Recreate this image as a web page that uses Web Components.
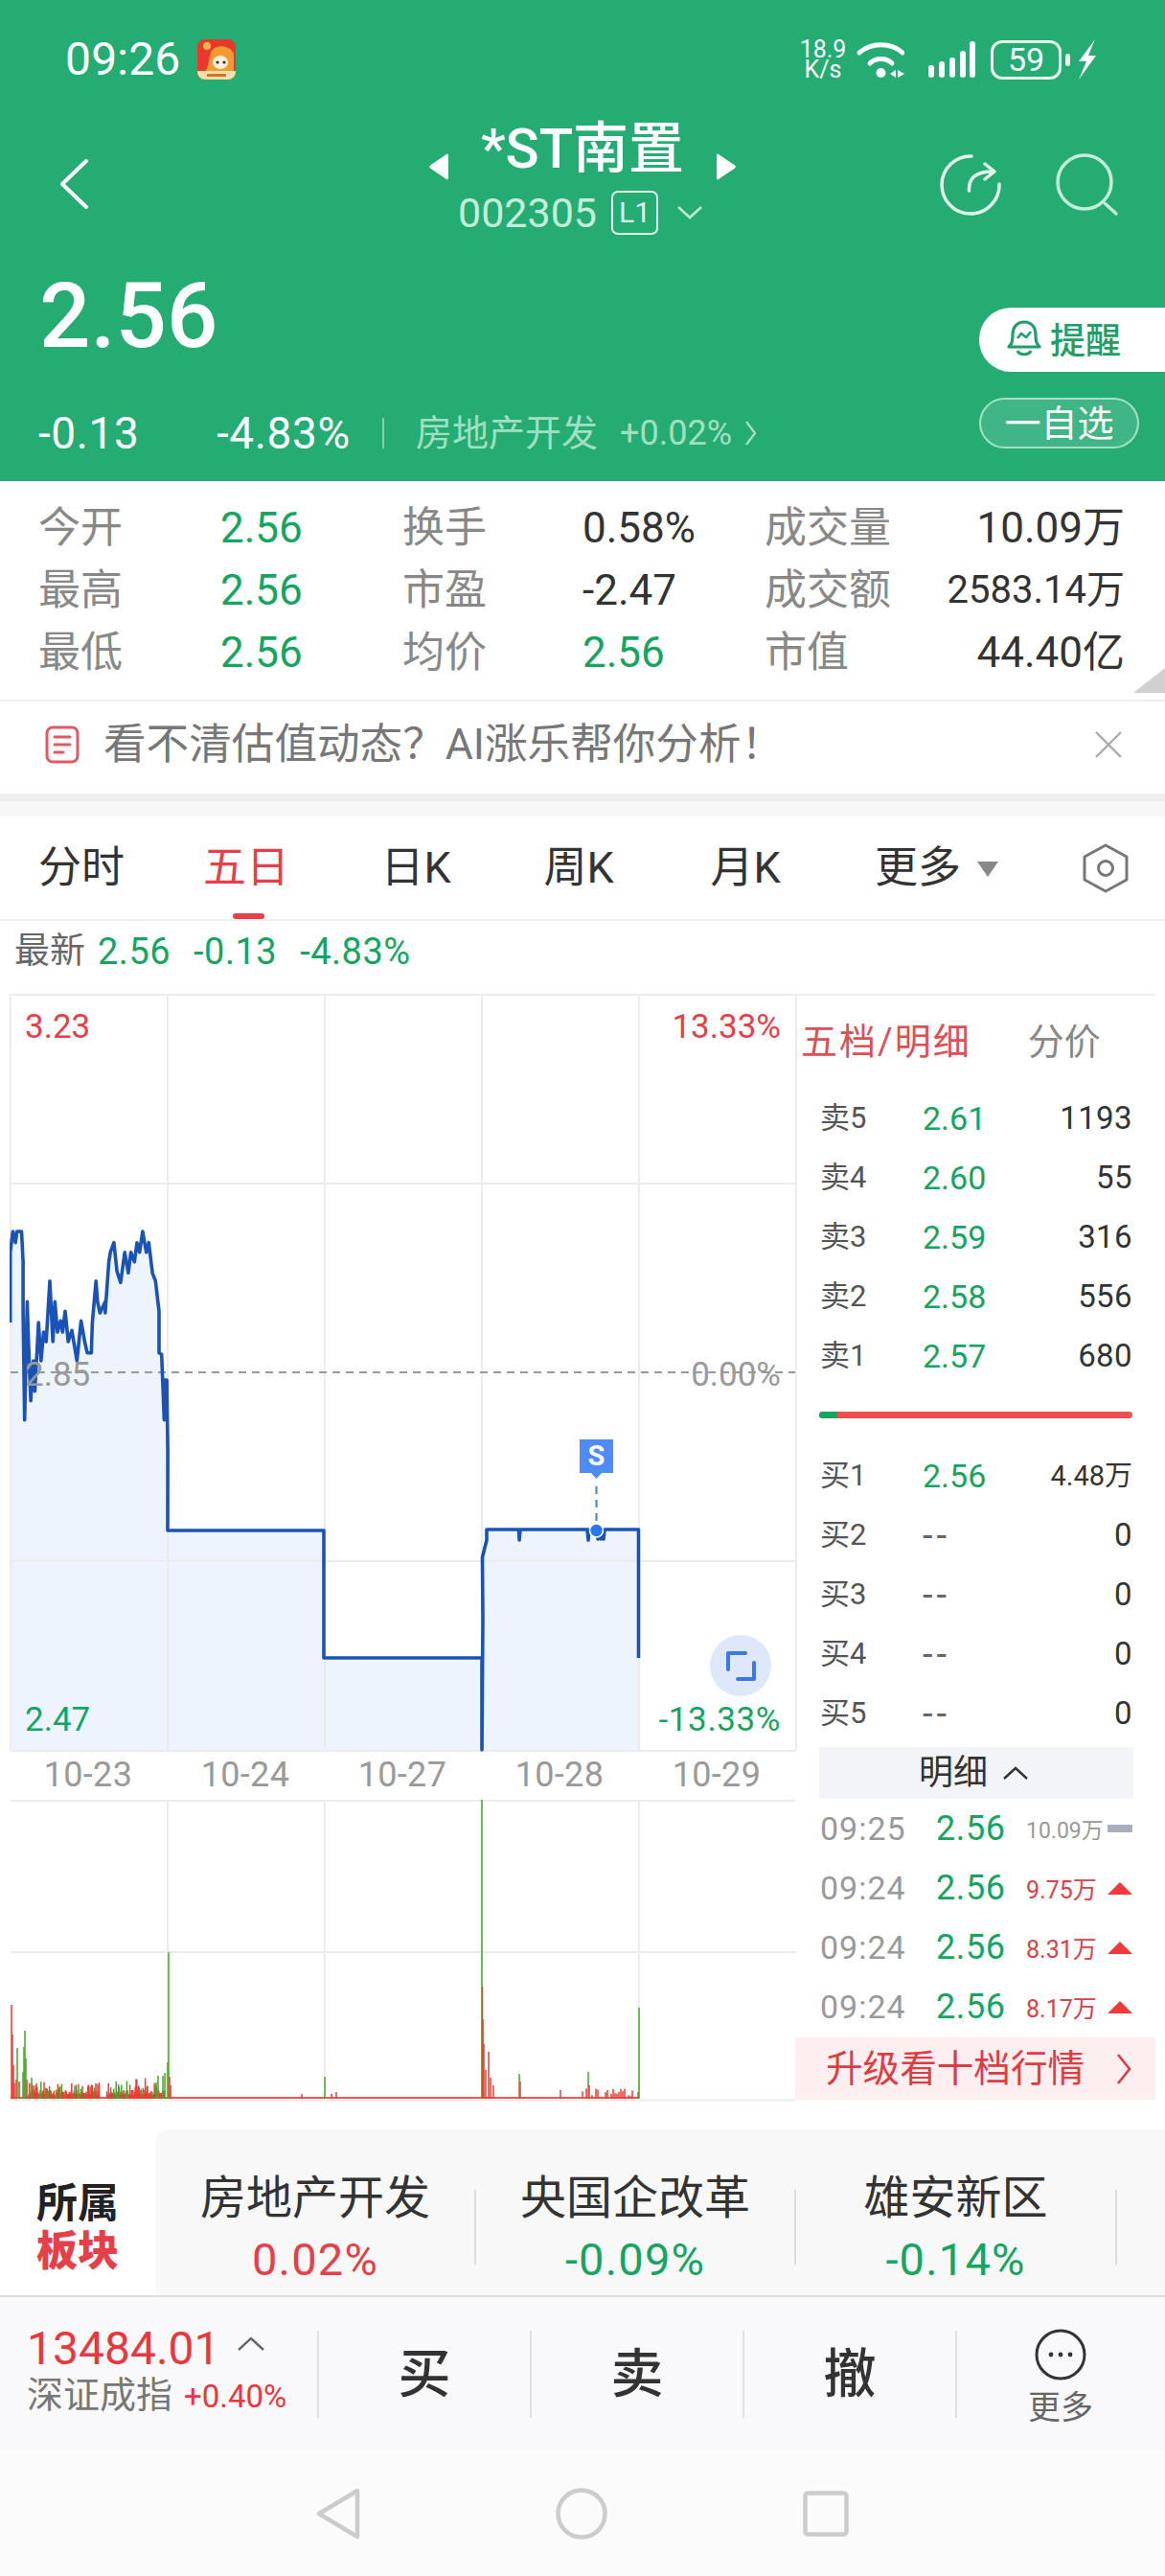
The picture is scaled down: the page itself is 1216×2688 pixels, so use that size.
<!DOCTYPE html>
<html lang="zh">
<head>
<meta charset="utf-8">
<title>*ST南置</title>
<style>
  html, body { margin: 0; padding: 0; }
  body {
    width: 1216px;
    height: 2688px;
    overflow: hidden;
    background: #fff;
    font-family: Roboto, "Noto Sans CJK SC", sans-serif;
    color: #333;
  }
</style>
</head>
<body>
<stock-header></stock-header>
<quote-stats></quote-stats>
<notice-bar></notice-bar>
<period-tabs></period-tabs>
<chart-panel></chart-panel>
<sector-strip></sector-strip>
<trade-bar></trade-bar>
<nav-bar></nav-bar>

<script>
class StatusBar extends HTMLElement {
  connectedCallback() {
    this.attachShadow({ mode: 'open' });
    this.shadowRoot.innerHTML = `
      <style>
        :host { display: flex; align-items: center; height: 124px; padding: 0 71px 0 68px; color: #fff; }
        .time { font-size: 48px; line-height: 56px; letter-spacing: .2px; }
        .app { margin-left: 17px; display: block; }
        .right { margin-left: auto; display: flex; align-items: center; }
        .speed { font-size: 25px; line-height: 21px; text-align: center; width: 54px; }
        .speed span { display: block; }
        .wifi { margin-left: 8px; display: block; }
        .signal { margin-left: 24px; display: block; }
        .batt {
          margin-left: 16px; width: 74px; height: 41px; box-sizing: border-box;
          border: 3px solid #e9f7f0; border-radius: 12px;
          display: flex; align-items: center; justify-content: center;
          font-size: 34px; line-height: 34px;
        }
        .nub { margin-left: 4px; width: 5px; height: 13px; background: #e9f7f0; border-radius: 3px; }
        .bolt { margin-left: 8px; display: block; }
      </style>
      <span class="time">09:26</span>
      <svg class="app" width="40" height="42" viewBox="0 0 40 42">
        <rect width="40" height="42" rx="8" fill="#e8392c"/>
        <path d="M14 14 C18 4 34 6 38 15 L38 34 L8 34 C12 28 12 20 14 14Z" fill="#f09a30"/>
        <ellipse cx="24" cy="24" rx="8" ry="7" fill="#fbeedd"/>
        <circle cx="21" cy="24" r="1.6" fill="#3a2a20"/><circle cx="28" cy="24" r="1.6" fill="#3a2a20"/>
        <circle cx="10" cy="7" r="4" fill="#f6b64a"/>
        <path d="M0 33 H40 V34 A8 8 0 0 1 32 42 H8 A8 8 0 0 1 0 34Z" fill="#f8dfa6"/>
        <rect x="10" y="36" width="20" height="3" fill="#c9772b"/>
      </svg>
      <div class="right">
        <div class="speed"><span>18.9</span><span>K/s</span></div>
        <svg class="wifi" width="50" height="40" viewBox="896 41 50 40">
          <path d="M899 54 C911 43 932 43 944 54" fill="none" stroke="#fff" stroke-width="5" stroke-linecap="round"/>
          <path d="M910 65 C916 59 927 59 933 65" fill="none" stroke="#fff" stroke-width="5" stroke-linecap="round"/>
          <circle cx="921.5" cy="75" r="5" fill="#fff"/>
          <path d="M937 72 V80 L931 76Z M939 72 V80 L946 76Z" fill="#fff"/>
        </svg>
        <svg class="signal" width="50" height="40" viewBox="969 41 50 40">
          <g fill="none" stroke="#fff" stroke-width="6" stroke-linecap="round">
            <path d="M973 70 V77"/><path d="M984 66 V77"/><path d="M995 62 V77"/><path d="M1006 55 V77"/><path d="M1016 45 V77"/>
          </g>
        </svg>
        <div class="batt">59</div>
        <div class="nub"></div>
        <svg class="bolt" width="20" height="42" viewBox="0 0 20 42">
          <path d="M18 0 L1 23 L9 23 L1 42 L19 17 L11 17 L18 0Z" fill="#fff"/>
        </svg>
      </div>
    `;
  }
}
customElements.define('status-bar', StatusBar);

class TitleRow extends HTMLElement {
  connectedCallback() {
    this.attachShadow({ mode: 'open' });
    this.shadowRoot.innerHTML = `
      <style>
        :host { display: block; position: relative; height: 126px; color: #fff; }
        .row { display: grid; grid-template-columns: 448px 320px 1fr; height: 126px; }
        svg { display: block; }
        .back { margin: 41px 0 0 60px; }
        .center { display: flex; flex-direction: column; align-items: center; }
        .name { display: flex; align-items: flex-start; justify-content: space-between; width: 320px; height: 72px; }
        .name b { font-weight: 500; font-size: 58px; line-height: 60px; margin-top: 1px; white-space: nowrap; }
        .name svg { margin-top: 36px; }
        .code { display: flex; align-items: center; margin: 2px 0 0 -5px; color: #c6ecda; font-size: 43px; line-height: 48px; }
        .l1 {
          margin-left: 15px; width: 49px; height: 46px; box-sizing: border-box;
          border: 2px solid #e5f6ee; border-radius: 7px; color: #e5f6ee;
          display: flex; align-items: center; justify-content: center;
          font-size: 30px; line-height: 30px;
        }
        .chev { margin-left: 20px; }
        .tools { display: flex; align-items: flex-start; justify-content: flex-end; padding: 34px 48px 0 0; }
        .tools .search { margin-left: 52px; }
      </style>
      <div class="row">
        <svg class="back" width="34" height="54" viewBox="60 165 34 54">
          <path d="M90 168 L65 192 L90 216" fill="none" stroke="#fff" stroke-width="4" stroke-linecap="round" stroke-linejoin="round"/>
        </svg>
        <div class="center">
          <div class="name">
            <svg width="20" height="28" viewBox="0 0 20 28"><path d="M18 1 C19.5 0 20 1 20 3 V25 C20 27 19 28 18 27 L1 15.5 C0 14.7 0 13.3 1 12.5Z" fill="#fff"/></svg>
            <b>*ST南置</b>
            <svg width="20" height="28" viewBox="0 0 20 28"><path d="M2 1 C.5 0 0 1 0 3 V25 C0 27 1 28 2 27 L19 15.5 C20 14.7 20 13.3 19 12.5Z" fill="#fff"/></svg>
          </div>
          <div class="code">
            <span>002305</span>
            <span class="l1">L1</span>
            <svg class="chev" width="26" height="14" viewBox="0 0 26 14"><path d="M1 1 L13 12 L25 1" fill="none" stroke="#c6ecda" stroke-width="2.4"/></svg>
          </div>
        </div>
        <div class="tools">
          <svg width="70" height="70" viewBox="978 156 70 70">
            <path d="M1014 161 A30 30 0 1 0 1043 190" fill="none" stroke="#e2f5ec" stroke-width="3.5" stroke-linecap="round"/>
            <path d="M1011.5 197 C1011 184 1018 177 1036 177 M1028 169 L1038 177 L1028 185" fill="none" stroke="#e2f5ec" stroke-width="3.5" stroke-linecap="round" stroke-linejoin="round"/>
          </svg>
          <svg class="search" width="68" height="72" viewBox="1102 156 68 72">
            <circle cx="1134" cy="188" r="28" fill="none" stroke="#c4ecd9" stroke-width="3.5"/>
            <path d="M1155 210 L1167 221" stroke="#c4ecd9" stroke-width="3.5" stroke-linecap="round"/>
          </svg>
        </div>
      </div>
    `;
  }
}
customElements.define('title-row', TitleRow);

class StockHeader extends HTMLElement {
  connectedCallback() {
    this.attachShadow({ mode: 'open' });
    this.shadowRoot.innerHTML = `
      <style>
        :host { display: block; height: 502px; background: #25ac72; color: #fff; overflow: hidden; }
        .quote { display: flex; }
        .left { flex: 1; }
        .price { padding: 32px 0 0 41px; font-size: 94px; line-height: 96px; font-weight: 500; }
        .change { display: flex; align-items: center; margin-top: 50px; padding-left: 40px; height: 48px; font-size: 46px; line-height: 48px; letter-spacing: .6px; }
        .chg { width: 186px; }
        .pct { width: 173px; }
        .sep { width: 2px; height: 32px; background: #7fcfab; }
        .plate { margin-left: 33px; font-size: 38px; color: #a0dfc1; letter-spacing: 0; }
        .plate-chg { margin-left: 23px; font-size: 36px; color: #a0dfc1; letter-spacing: 0; }
        .change svg { margin-left: 13px; }
        .right { width: 194px; padding-top: 71px; }
        .remind {
          height: 67px; box-sizing: border-box; padding: 0 0 4px 29px;
          background: #fff; border-radius: 33px 0 0 33px; color: #1f9f68;
          display: flex; align-items: center; font-size: 37px; font-weight: 500;
        }
        .remind span { margin-left: 9px; }
        .watch {
          margin-top: 27px; width: 167px; height: 53px; box-sizing: border-box;
          background: rgba(255,255,255,.12); border: 2px solid rgba(255,255,255,.55); border-radius: 27px;
          display: flex; align-items: center; justify-content: center; font-size: 38px; line-height: 40px;
        }
      </style>
      <status-bar></status-bar>
      <title-row></title-row>
      <div class="quote">
        <div class="left">
          <div class="price">2.56</div>
          <div class="change">
            <span class="chg">-0.13</span>
            <span class="pct">-4.83%</span>
            <span class="sep"></span>
            <span class="plate">房地产开发</span>
            <span class="plate-chg">+0.02%</span>
            <svg width="13" height="28" viewBox="0 0 13 28"><path d="M2 2 L11 14 L2 26" fill="none" stroke="#a0dfc1" stroke-width="2.4"/></svg>
          </div>
        </div>
        <div class="right">
          <div class="remind">
            <svg width="36" height="38" viewBox="0 0 36 38">
              <path d="M2 28 C6 24 6 20 6 15 C6 7 11 2 18 2 C25 2 30 7 30 15 C30 20 30 24 34 28Z" fill="none" stroke="#1f9f68" stroke-width="3.2" stroke-linejoin="round"/>
              <path d="M11 32 C13 37 23 37 25 32" fill="none" stroke="#1f9f68" stroke-width="3.2"/>
              <path d="M11 19 L15 14 L20 18 L25 12" fill="none" stroke="#1f9f68" stroke-width="2.6" stroke-linejoin="round"/>
            </svg>
            <span>提醒</span>
          </div>
          <div class="watch">一自选</div>
        </div>
      </div>
    `;
  }
}
customElements.define('stock-header', StockHeader);

class QuoteStats extends HTMLElement {
  connectedCallback() {
    const rows = [
      ['今开', '2.56', 'g', '换手', '0.58%', 'd', '成交量', '10.09万', ''],
      ['最高', '2.56', 'g', '市盈', '-2.47', 'd', '成交额', '2583.14万', 's'],
      ['最低', '2.56', 'g', '均价', '2.56', 'g', '市值', '44.40亿', '']
    ];
    const cells = rows.map(r => `
      <span class="l">${r[0]}</span><span class="${r[2]}">${r[1]}</span>
      <span class="l">${r[3]}</span><span class="${r[5]}">${r[4]}</span>
      <span class="l">${r[6]}</span><span class="v ${r[8]}">${r[7]}</span>`).join('');
    this.attachShadow({ mode: 'open' });
    this.shadowRoot.innerHTML = `
      <style>
        :host { display: block; position: relative; height: 230px; box-sizing: border-box; padding: 16px 42px 0 40px; border-bottom: 2px solid #eee; background: #fff; }
        .grid { display: grid; grid-template-columns: 190px 190px 188px 190px 140px 1fr; grid-auto-rows: 65px; align-items: center; font-size: 44px; line-height: 50px; }
        .l { color: #888; white-space: nowrap; }
        .g { color: #16a461; }
        .d { color: #333; }
        .v { color: #333; text-align: right; white-space: nowrap; }
        .s { font-size: 40px; }
        .corner { position: absolute; right: 0; bottom: 7px; }
      </style>
      <div class="grid">${cells}</div>
      <svg class="corner" width="33" height="26" viewBox="0 0 33 26"><path d="M33 0 V26 H0Z" fill="#d0d0d0"/></svg>
    `;
  }
}
customElements.define('quote-stats', QuoteStats);

class NoticeBar extends HTMLElement {
  connectedCallback() {
    this.attachShadow({ mode: 'open' });
    this.shadowRoot.innerHTML = `
      <style>
        :host { display: flex; align-items: center; height: 96px; padding: 0 44px 6px 47px; box-sizing: border-box; background: #fff; color: #777; }
        span { margin-left: 25px; font-size: 44.6px; line-height: 50px; white-space: nowrap; }
        .x { margin-left: auto; }
      </style>
      <svg width="36" height="40" viewBox="0 0 36 40">
        <rect x="2" y="2" width="32" height="36" rx="6" fill="none" stroke="#df5a62" stroke-width="3"/>
        <path d="M10 12 H26 M10 20 H26 M10 28 H19" stroke="#df5a62" stroke-width="3" stroke-linecap="round"/>
      </svg>
      <span>看不清估值动态？AI涨乐帮你分析！</span>
      <svg class="x" width="30" height="30" viewBox="0 0 30 30"><path d="M2 2 L28 28 M28 2 L2 28" stroke="#aaa" stroke-width="2.4"/></svg>
    `;
  }
}
customElements.define('notice-bar', NoticeBar);

class PeriodTabs extends HTMLElement {
  connectedCallback() {
    this.attachShadow({ mode: 'open' });
    this.shadowRoot.innerHTML = `
      <style>
        :host { display: block; background: #fff; }
        .band { height: 8px; background: #eee; }
        .band2 { height: 16px; background: #f7f7f7; }
        .tabs {
          display: grid; grid-template-columns: 170px 174px 180px 160px 188px 172px 1fr;
          height: 109px; box-sizing: border-box; border-bottom: 2px solid #eee;
          font-size: 45px; line-height: 50px; color: #333; align-items: center; text-align: center;
        }
        .on { color: #e5404a; position: relative; }
        .on::after {
          content: ""; position: absolute; left: 73px; right: 68px; top: 72px; height: 6px;
          background: #e5404a; border-radius: 3px;
        }
        .more { position: relative; }
        .more svg { position: absolute; left: 147px; top: 18px; }
        .hex { justify-self: start; margin-left: 86px; display: block; }
      </style>
      <div class="band"></div>
      <div class="band2"></div>
      <div class="tabs">
        <span>分时</span>
        <span class="on">五日</span>
        <span>日K</span>
        <span>周K</span>
        <span>月K</span>
        <span class="more">更多<svg width="24" height="16" viewBox="0 0 24 16"><path d="M1 0 H23 L12 16Z" fill="#888"/></svg></span>
        <svg class="hex" width="48" height="52" viewBox="0 0 48 52">
          <path d="M24 2 L46 14 V38 L24 50 L2 38 V14Z" fill="none" stroke="#777" stroke-width="3" stroke-linejoin="round"/>
          <circle cx="24" cy="26" r="7.5" fill="none" stroke="#777" stroke-width="3"/>
        </svg>
      </div>
    `;
  }
}
customElements.define('period-tabs', PeriodTabs);

class PriceChart extends HTMLElement {
  connectedCallback() {
    // day one read off the reference
    const day1 = [[20,1080],[20,860],[25,795],[30,830],[33,795],[42,795],[45,890],[45,1050],[48,1385],[53,1015],[55,1120],[60,1325],[65,1200],[68,1295],[75,1080],[80,1200],[85,1110],[90,1140],[97,950],[103,1140],[107,1015],[112,1110],[118,1075],[122,1110],[127,1045],[133,1140],[140,1105],[150,1200],[158,1075],[165,1140],[170,1175],[178,1175],[180,1080],[187,950],[190,1015],[195,1050],[205,1015],[205,1050],[212,890],[215,860],[222,830],[228,920],[235,955],[243,860],[250,925],[255,860],[262,890],[267,830],[272,860],[278,795],[285,860],[290,830],[297,925],[303,950],[310,1045],[310,1175],[315,1180],[320,1385],[320,1260],[325,1260],[327,1480]]
      .map(p => [+(p[0] / 1.867).toFixed(1), +(p[1] / 3 + 1020).toFixed(1)]);
    const rest = [[175,1597],[338,1597],[338,1730],[503,1730],[503,1826],[504,1690],[503.5,1625],[508,1607],[508,1596],
      [541.5,1596],[542,1607],[543,1596],[613,1596],[614,1607],[615,1596],[623,1596],[624,1606],[625,1596],[627,1606],[628,1596],[630,1606],[631,1596],[666.5,1596],[666.5,1730]];
    const pts = day1.concat(rest);
    const line = pts.map(p => p.join(',')).join(' ');
    const fill = `11,1826 ${line} 666.5,1596 666.5,1826`;
    this.attachShadow({ mode: 'open' });
    this.shadowRoot.innerHTML = `
      <style>
        :host { display: block; position: relative; width: 822px; height: 791px; }
        svg { display: block; }
        span { position: absolute; font-size: 35px; line-height: 38px; }
        .red { color: #e5404a; }
        .grey { color: #999; }
        .green { color: #16a461; }
        .a { left: 16px; }
        .b { right: 17px; }
        .wide { letter-spacing: .6px; }
      </style>
      <svg width="822" height="791" viewBox="10 1037 822 791">
        <polygon points="${fill}" fill="#eef4fd"/>
        <g stroke="#ececec" stroke-width="2" fill="none">
          <path d="M11 1038 H830 M11 1235 H830 M11 1629 H830 M11 1827 H830"/>
          <path d="M11 1037 V1827 M175 1037 V1827 M339 1037 V1827 M503 1037 V1827 M667 1037 V1827 M831 1037 V1827"/>
        </g>
        <path d="M11 1432 H830" stroke="#999" stroke-width="2" stroke-dasharray="8 6"/>
        <polyline points="${line}" fill="none" stroke="#1b52b6" stroke-width="3.6" stroke-linejoin="round"/>
        <path d="M622.5 1551 V1592" stroke="#3f7fe8" stroke-width="2" stroke-dasharray="8 6"/>
        <circle cx="622.5" cy="1597" r="7" fill="#2a76f0" stroke="#fff" stroke-width="1.6"/>
        <path d="M605 1502 H640 V1537 H628 L622.5 1543 L617 1537 H605Z" fill="#4d8bf5"/>
        <text x="622.5" y="1529" text-anchor="middle" fill="#fff" font-size="29" font-weight="700" font-family="Roboto">S</text>
        <circle cx="773" cy="1738" r="32" fill="#dfe8fb"/>
        <path d="M778 1725 H760 V1742 M787 1735 V1752 H770" fill="none" stroke="#3b78e7" stroke-width="4" stroke-linecap="round" stroke-linejoin="round"/>
      </svg>
      <span class="red a" style="top:16px">3.23</span>
      <span class="red b" style="top:16px">13.33%</span>
      <span class="grey a" style="top:379px">2.85</span>
      <span class="grey b" style="top:379px">0.00%</span>
      <span class="green a" style="top:739px">2.47</span>
      <span class="green b wide" style="top:739px">-13.33%</span>
    `;
  }
}
customElements.define('price-chart', PriceChart);

class VolumeChart extends HTMLElement {
  connectedCallback() {
    let seed = 4711;
    const rnd = () => (seed = (seed * 16807) % 2147483647) / 2147483647;
    const R = '#ee3b33', G = '#4ca32a';
    const bars = [];
    for (let x = 30; x < 172; x += 0.8) {
      if (x > 104 && x < 111) continue;
      const h = 4 + rnd() * rnd() * 20;
      bars.push([x, 2190 - h, rnd() < 0.68 ? R : G]);
    }
    // opening cluster, explicit because it is what the eye catches
    [[12,2092,R],[13,2123,R],[14,2155,R],[15,2174,R],[17,2170,R],[18,2137,G],[20,2172,R],[24,2162,G],[25,2136,G],[26,2119,G],[27,2148,G],[28,2170,R],
     [33,2168,G],[35,2176,R],[38,2174,R],[100,2174,R],[163,2173,G],[165,2166,G],[170,2166,G],[172,2163,G],[175,2152,G],[176,2037,G],[177,2167,R],[178,2176,R]]
      .forEach(b => bars.push(b));
    [[315,2185,R],[339,2167,G],[346,2185,R],[351,2183,R],
     [503,1878,G],[503.5,2073,R],[504,2107,R],[505,2133,R],[507,2160,R],[510,2141,R],[512,2168,R],[515,2176,R],
     [542,2164,G],[543,2172,R],[585,2181,R],[614,2162,G],[615,2176,R],[640,2180,R],[666,2183,R],[667,2095,G]]
      .forEach(b => bars.push(b));
    for (let x = 606; x < 664; x += 2) {
      if (rnd() < 0.55) bars.push([x, 2190 - 2 - rnd() * 9, R]);
    }
    const rects = bars.map(b => `<path d="M${b[0]} ${b[1]} V2190" stroke="${b[2]}"/>`).join('');
    this.attachShadow({ mode: 'open' });
    this.shadowRoot.innerHTML = `
      <style>
        :host { display: block; width: 822px; height: 315px; }
        svg { display: block; }
      </style>
      <svg width="822" height="315" viewBox="10 1878 822 315">
        <g stroke="#ececec" stroke-width="2" fill="none">
          <path d="M11 1879 H830 M11 2037 H830 M10 2191.5 H830" />
          <path d="M175 1878 V2190 M339 1878 V2190 M503 1878 V2190 M667 1878 V2190 M831 1878 V2190"/>
        </g>
        <path d="M11 2189 H667" stroke="#ee5a52" stroke-width="2"/>
        <g stroke-width="1.5" fill="none">${rects}</g>
      </svg>
    `;
  }
}
customElements.define('volume-chart', VolumeChart);

class BookRow extends HTMLElement {
  connectedCallback() {
    this.attachShadow({ mode: 'open' });
    this.shadowRoot.innerHTML = `
      <style>
        :host { display: grid; grid-template-columns: 107px 1fr auto; align-items: center; height: 62px; font-size: 33px; line-height: 40px; }
        .l { color: #555; font-size: 31px; }
        .p { color: #16a461; font-size: 34px; }
        .v { color: #333; font-size: 33px; letter-spacing: .4px; }
        .p.none { color: #666; font-size: 38px; letter-spacing: 4px; }
        .s { font-size: 29px; letter-spacing: 0; }
      </style>
      <span class="l">${this.getAttribute('label')}</span>
      <span class="p ${this.getAttribute('price') === '--' ? 'none' : ''}">${this.getAttribute('price')}</span>
      <span class="v ${this.hasAttribute('small') ? 's' : ''}">${this.getAttribute('vol')}</span>
    `;
  }
}
customElements.define('book-row', BookRow);

class TickRow extends HTMLElement {
  connectedCallback() {
    const dir = this.getAttribute('dir');
    const mark = dir === 'up'
      ? '<svg width="26" height="13" viewBox="0 0 26 13"><path d="M13 0 L26 13 H0Z" fill="#ef3b3b"/></svg>'
      : '<svg width="26" height="8" viewBox="0 0 26 8"><rect width="26" height="8" fill="#a9afb8"/></svg>';
    this.attachShadow({ mode: 'open' });
    this.shadowRoot.innerHTML = `
      <style>
        :host { display: grid; grid-template-columns: 121px 94px 1fr 26px; align-items: center; height: 62px; }
        .t { color: #999; font-size: 34px; letter-spacing: 1px; }
        .p { color: #16a461; font-size: 36px; letter-spacing: .6px; }
        .v { font-size: ${dir === 'up' ? 25 : 23}px; color: ${dir === 'up' ? '#d8414a' : '#999'}; white-space: nowrap; }
        svg { display: block; }
      </style>
      <span class="t">${this.getAttribute('time')}</span>
      <span class="p">2.56</span>
      <span class="v">${this.getAttribute('vol')}</span>
      ${mark}
    `;
  }
}
customElements.define('tick-row', TickRow);

class OrderBook extends HTMLElement {
  connectedCallback() {
    this.attachShadow({ mode: 'open' });
    this.shadowRoot.innerHTML = `
      <style>
        :host { display: block; width: 376px; height: 1156px; box-sizing: border-box; border-top: 2px solid #eee; background: #fff; }
        .head { display: flex; height: 97px; align-items: center; padding-left: 6px; padding-bottom: 2px; font-size: 38px; line-height: 44px; letter-spacing: 2px; color: #dc4f55; box-sizing: border-box; }
        .head b { font-weight: 400; margin-left: 59px; color: #888; letter-spacing: 0; }
        .rows { padding: 0 24px 0 26px; }
        .bar { margin: 27px 24px 29px 25px; height: 7px; border-radius: 4px; overflow: hidden; background: #ef4f4f; }
        .bar i { display: block; width: 19px; height: 7px; background: #16a461; }
        .detail {
          margin: 4px 23px 0 25px; height: 54px; box-sizing: border-box; padding-right: 6px; background: #f3f4f8; color: #333;
          display: flex; align-items: center; justify-content: center; font-size: 36px; line-height: 40px;
        }
        .detail svg { margin-left: 16px; }
        .up {
          margin-top: 1px; height: 65px; background: #fdeeef; color: #dd3c44;
          display: flex; align-items: center; padding: 0 25px 0 32px; font-size: 38.6px; line-height: 44px;
        }
        .up svg { margin-left: auto; }
      </style>
      <div class="head">五档/明细<b>分价</b></div>
      <div class="rows">
        <book-row label="卖5" price="2.61" vol="1193"></book-row>
        <book-row label="卖4" price="2.60" vol="55"></book-row>
        <book-row label="卖3" price="2.59" vol="316"></book-row>
        <book-row label="卖2" price="2.58" vol="556"></book-row>
        <book-row label="卖1" price="2.57" vol="680"></book-row>
      </div>
      <div class="bar"><i></i></div>
      <div class="rows">
        <book-row label="买1" price="2.56" vol="4.48万" small></book-row>
        <book-row label="买2" price="--" vol="0"></book-row>
        <book-row label="买3" price="--" vol="0"></book-row>
        <book-row label="买4" price="--" vol="0"></book-row>
        <book-row label="买5" price="--" vol="0"></book-row>
      </div>
      <div class="detail">明细<svg width="26" height="14" viewBox="0 0 26 14"><path d="M1 13 L13 2 L25 13" fill="none" stroke="#333" stroke-width="2.4"/></svg></div>
      <div class="rows">
        <tick-row time="09:25" vol="10.09万" dir="flat"></tick-row>
        <tick-row time="09:24" vol="9.75万" dir="up"></tick-row>
        <tick-row time="09:24" vol="8.31万" dir="up"></tick-row>
        <tick-row time="09:24" vol="8.17万" dir="up"></tick-row>
      </div>
      <div class="up">升级看十档行情<svg width="16" height="34" viewBox="0 0 16 34"><path d="M2 2 L14 17 L2 32" fill="none" stroke="#dd3c44" stroke-width="2.6"/></svg></div>
    `;
  }
}
customElements.define('order-book', OrderBook);

class ChartPanel extends HTMLElement {
  connectedCallback() {
    this.attachShadow({ mode: 'open' });
    this.shadowRoot.innerHTML = `
      <style>
        :host { display: block; background: #fff; }
        .latest { display: flex; height: 76px; box-sizing: border-box; padding: 7px 0 0 15px; font-size: 38px; line-height: 50px; color: #16a461; white-space: nowrap; }
        .latest b { font-weight: 400; color: #666; font-size: 37px; margin-right: 13px; }
        .latest span { margin-right: 24px; letter-spacing: .5px; }
        .body { display: flex; padding-left: 10px; }
        .left { width: 820px; }
        .dates { display: grid; grid-template-columns: repeat(5, 164px); height: 52px; align-items: center; text-align: center; font-size: 36px; line-height: 38px; color: #999; letter-spacing: .3px; margin-top: -2px; }
      </style>
      <div class="latest"><b>最新</b><span>2.56</span><span>-0.13</span><span>-4.83%</span></div>
      <div class="body">
        <div class="left">
          <price-chart></price-chart>
          <div class="dates"><span>10-23</span><span>10-24</span><span>10-27</span><span>10-28</span><span>10-29</span></div>
          <volume-chart></volume-chart>
        </div>
        <order-book></order-book>
      </div>
    `;
  }
}
customElements.define('chart-panel', ChartPanel);

class SectorItem extends HTMLElement {
  connectedCallback() {
    this.attachShadow({ mode: 'open' });
    this.shadowRoot.innerHTML = `
      <style>
        :host { display: flex; align-items: center; }
        .c { flex: 1; text-align: center; }
        .n { font-size: 48px; line-height: 56px; color: #333; padding-top: 2px; }
        .p { font-size: 47px; line-height: 50px; margin-top: 11px; letter-spacing: 1.2px; color: ${this.getAttribute('pct').startsWith('-') ? '#16a461' : '#e5404a'}; }
        i { width: 2px; height: 78px; background: #dcdcdc; }
      </style>
      <div class="c"><div class="n"><slot></slot></div><div class="p">${this.getAttribute('pct')}</div></div>
      <i></i>
    `;
  }
}
customElements.define('sector-item', SectorItem);

class SectorStrip extends HTMLElement {
  connectedCallback() {
    this.attachShadow({ mode: 'open' });
    this.shadowRoot.innerHTML = `
      <style>
        :host { display: flex; height: 204px; box-sizing: border-box; padding-top: 29px; background: #fff; border-bottom: 2px solid #ddd; }
        .tag { width: 163px; box-sizing: border-box; padding: 52px 0 0 38px; font-size: 43px; line-height: 50px; font-weight: 700; color: #222; }
        .tag b { display: block; color: #e5404a; }
        .panel {
          flex: 1; display: grid; grid-template-columns: 334px 334px 335px; background: #f8f8f8;
          border-top-left-radius: 14px; padding-top: 30px;
        }
      </style>
      <div class="tag">所属<b>板块</b></div>
      <div class="panel">
        <sector-item pct="0.02%">房地产开发</sector-item>
        <sector-item pct="-0.09%">央国企改革</sector-item>
        <sector-item pct="-0.14%">雄安新区</sector-item>
      </div>
    `;
  }
}
customElements.define('sector-strip', SectorStrip);

class TradeBar extends HTMLElement {
  connectedCallback() {
    this.attachShadow({ mode: 'open' });
    this.shadowRoot.innerHTML = `
      <style>
        :host { display: flex; align-items: center; height: 161px; background: #f9f9fb; }
        .index { width: 331px; box-sizing: border-box; padding: 0 0 7px 28px; }
        .idx { display: flex; align-items: center; font-size: 48px; line-height: 50px; color: #e8373d; }
        .idx svg { margin-left: 18px; margin-top: -10px; }
        .sub { display: flex; align-items: baseline; margin-top: 1px; font-size: 38px; line-height: 44px; color: #777; white-space: nowrap; }
        .sub span { margin-left: 12px; font-size: 33px; color: #e8373d; }
        .cell {
          width: 222px; height: 91px; box-sizing: border-box; border-left: 2px solid #e2e2e2; padding-bottom: 12px;
          display: flex; flex-direction: column; align-items: center; justify-content: center;
          font-size: 55px; font-weight: 500; color: #333;
        }
        .more { width: 218px; padding-bottom: 0; font-size: 34px; font-weight: 400; color: #666; line-height: 40px; }
        .more svg { display: block; margin: 6px 0 8px; flex: none; }
      </style>
      <div class="index">
        <div class="idx">13484.01<svg width="28" height="14" viewBox="0 0 28 14"><path d="M1 13 L14 1 L27 13" fill="none" stroke="#666" stroke-width="2.4"/></svg></div>
        <div class="sub">深证成指<span>+0.40%</span></div>
      </div>
      <div class="cell">买</div>
      <div class="cell">卖</div>
      <div class="cell">撤</div>
      <div class="cell more">
        <svg width="54" height="54" viewBox="0 0 54 54">
          <circle cx="27" cy="27" r="25" fill="none" stroke="#333" stroke-width="3"/>
          <circle cx="17" cy="27" r="2.4" fill="#333"/><circle cx="27" cy="27" r="2.4" fill="#333"/><circle cx="37" cy="27" r="2.4" fill="#333"/>
        </svg>
        <span>更多</span>
      </div>
    `;
  }
}
customElements.define('trade-bar', TradeBar);

class NavBar extends HTMLElement {
  connectedCallback() {
    this.attachShadow({ mode: 'open' });
    this.shadowRoot.innerHTML = `
      <style>
        :host { display: flex; align-items: center; justify-content: center; gap: 204px; height: 130px; background: #fbfbfb; }
        svg { display: block; }
      </style>
      <svg width="46" height="54" viewBox="0 0 46 54"><path d="M43 3 V51 L3 27Z" fill="none" stroke="#ccc" stroke-width="4.5" stroke-linejoin="round"/></svg>
      <svg width="54" height="54" viewBox="0 0 54 54"><circle cx="27" cy="27" r="24.5" fill="none" stroke="#ccc" stroke-width="4.5"/></svg>
      <svg width="48" height="48" viewBox="0 0 48 48"><rect x="2.5" y="2.5" width="43" height="43" rx="3" fill="none" stroke="#ccc" stroke-width="4.5"/></svg>
    `;
  }
}
customElements.define('nav-bar', NavBar);
</script>
</body>
</html>
